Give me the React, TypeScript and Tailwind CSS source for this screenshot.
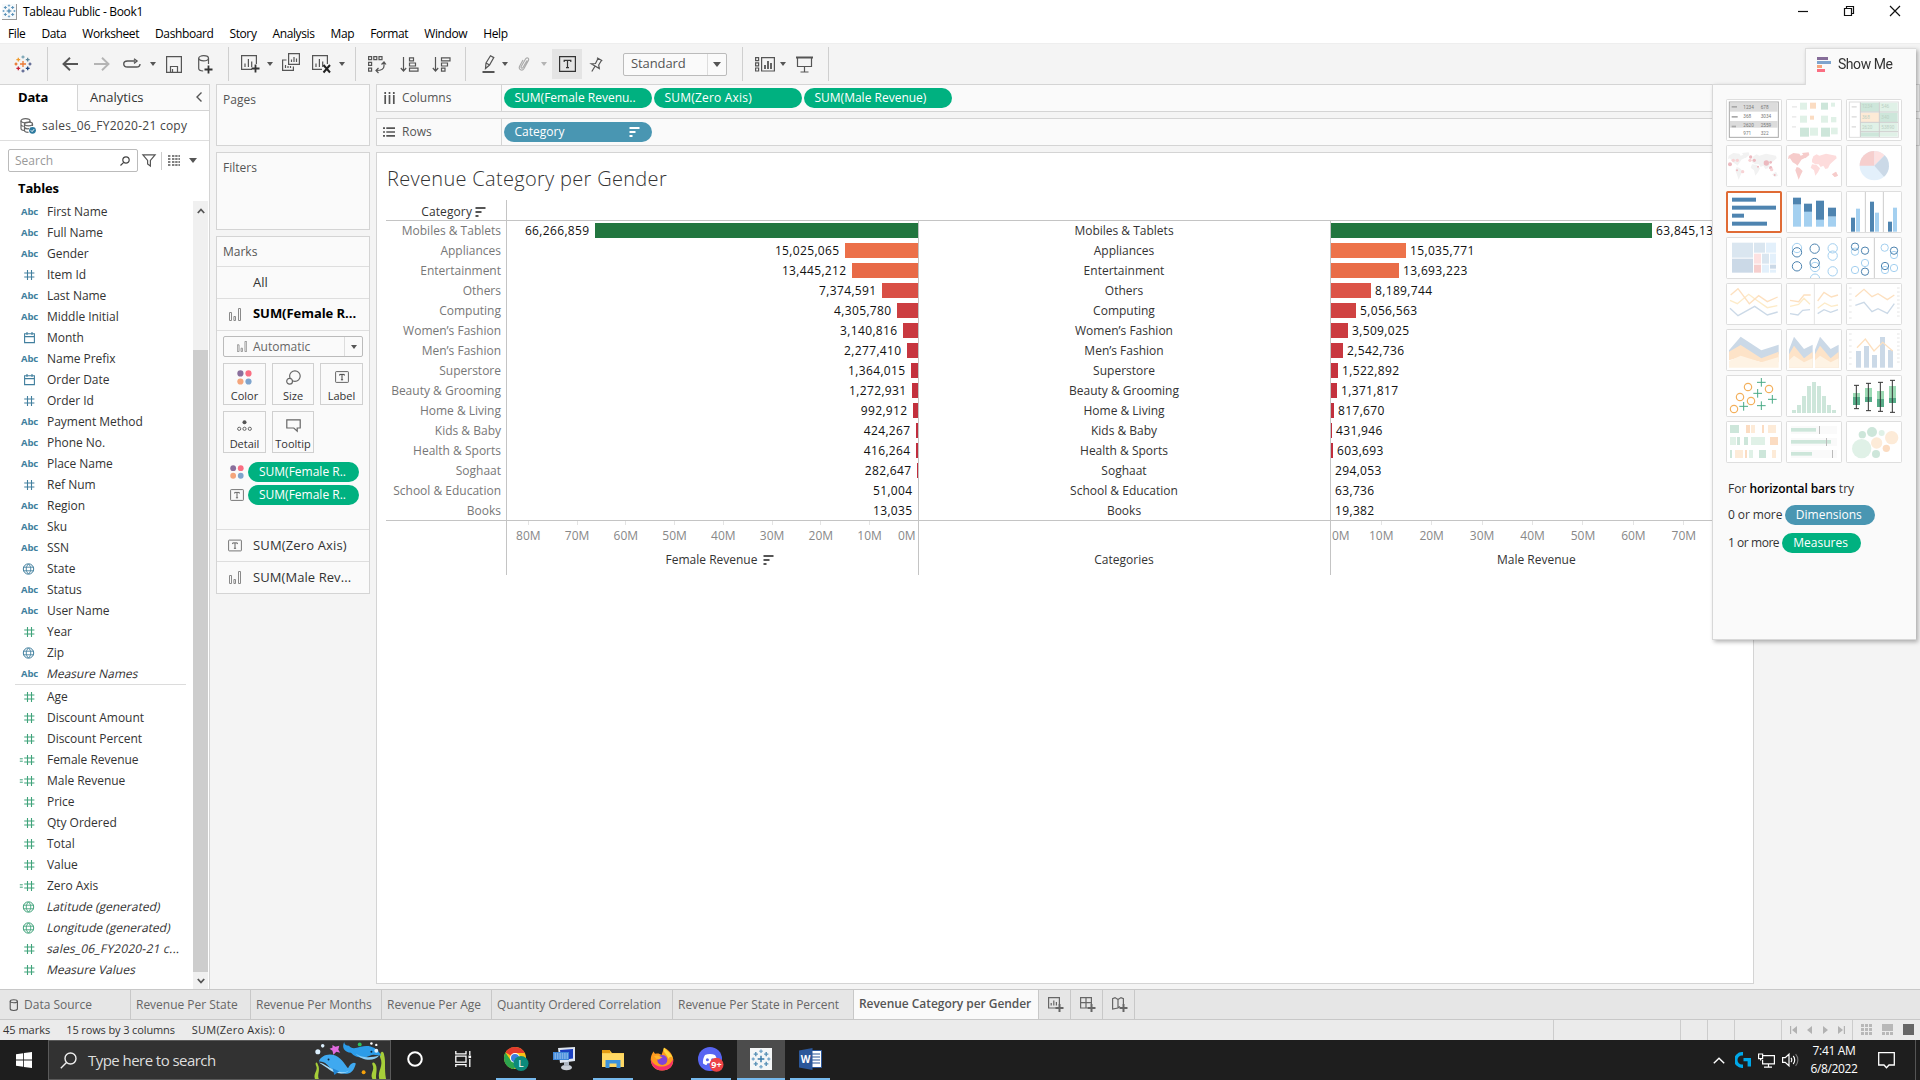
import React from "react";

type Kids = { children?: React.ReactNode };

const Ico = ({ w, h, children, s = "#555", className = "" }: Kids & { w: number; h: number; s?: string; className?: string }) => (
  <svg width={w} height={h} viewBox={`0 0 ${w} ${h}`} fill="none" stroke={s} strokeWidth="1.2" className={`shrink-0 overflow-visible ${className}`}>
    {children}
  </svg>
);

const Caret = ({ c = "#555", className = "" }: { c?: string; className?: string }) => (
  <svg width="6" height="4" viewBox="0 0 6 4" className={`shrink-0 ${className}`}>
    <path d="M0 0H6L3 4Z" fill={c} />
  </svg>
);

const BigCaret = ({ className = "" }: { className?: string }) => (
  <svg width="8" height="5" viewBox="0 0 8 5" className={`shrink-0 ${className}`}>
    <path d="M0 0H8L4 5Z" fill="#555" />
  </svg>
);

const Sep = ({ className = "" }: { className?: string }) => <div className={`h-[34px] w-px shrink-0 bg-[#cfcfcf] ${className}`} />;

const plus = (x: number, y: number, r: number) => `M${x - r} ${y}H${x + r}M${x} ${y - r}V${y + r}`;

const TableauMark = ({ size, mono = false }: { size: number; mono?: boolean }) => (
  <svg width={size} height={size} viewBox="0 0 18 18" fill="none" strokeWidth="1.3" className="shrink-0">
    <path d={plus(9, 9, 3)} stroke={mono ? "#3478a8" : "#eb7a35"} />
    <path d={plus(4.3, 4.6, 1.9)} stroke={mono ? "#5b92b8" : "#ef9b2e"} />
    <path d={plus(13.7, 4.6, 1.9)} stroke={mono ? "#5b92b8" : "#5b879b"} />
    <path d={plus(4.3, 13.4, 1.9)} stroke={mono ? "#5b92b8" : "#c72037"} />
    <path d={plus(13.7, 13.4, 1.9)} stroke={mono ? "#5b92b8" : "#1f457e"} />
    <path d={plus(9, 2, 1.5)} stroke={mono ? "#78a8ca" : "#7aa5b5"} />
    <path d={plus(9, 16, 1.5)} stroke={mono ? "#78a8ca" : "#5c6692"} />
    <path d={plus(2, 9, 1.4)} stroke={mono ? "#78a8ca" : "#e8762c"} />
    <path d={plus(16, 9, 1.4)} stroke={mono ? "#78a8ca" : "#5b6591"} />
  </svg>
);

const TBox = ({ w = 14, h = 12, c = "#666", b = "#777" }: { w?: number; h?: number; c?: string; b?: string }) => (
  <svg width={w} height={h} viewBox="0 0 14 12" fill="none" className="shrink-0">
    <rect x="0.6" y="0.6" width="12.8" height="10.8" rx="0.6" stroke={b} strokeWidth="1" />
    <path d="M4.7 4.6V3.4H9.3V4.6M7 3.4V8.7M5.9 8.8H8.1" stroke={c} strokeWidth="1" />
  </svg>
);

const MiniBars = ({ c = "#8a8a8a" }: { c?: string }) => (
  <svg width="12" height="13" viewBox="0 0 12 13" fill="none" stroke={c} className="shrink-0">
    <path d="M0.5 4.5h2v8h-2zM4.9 8.5h1.6v4H4.9zM9.5 0.5h2v12h-2z" />
  </svg>
);

const FourDots = ({ size = 15 }: { size?: number }) => (
  <svg width={size} height={size} viewBox="0 0 15 15" className="shrink-0">
    <circle cx="3.4" cy="3.4" r="3.1" fill="#8a6f9c" />
    <circle cx="11.5" cy="3.4" r="3.1" fill="#fa6e82" />
    <circle cx="3.4" cy="11.5" r="3.1" fill="#f4a57c" />
    <circle cx="11.5" cy="11.5" r="3.1" fill="#7ea4cd" />
  </svg>
);

const SortIcon = ({ c = "#555" }: { c?: string }) => (
  <svg width="11" height="10" viewBox="0 0 11 10" className="shrink-0">
    <path d="M0.5 0H10.5V2H0.5zM0.5 4H6.5V6H0.5zM0.5 8H3.5V10H0.5z" fill={c} />
  </svg>
);

/* ---------- title, menu, toolbar ---------- */

const MENUS = ["File", "Data", "Worksheet", "Dashboard", "Story", "Analysis", "Map", "Format", "Window", "Help"];

const TitleBar = () => (
  <div className="flex h-[22px] items-center bg-white pt-px text-xs text-black">
    <div className="ml-[2px] flex h-[16px] w-[15px] items-center justify-center border-r border-b border-[#999] bg-[#f6f9fb]">
      <TableauMark size={14} mono />
    </div>
    <span className="ml-[6px] tracking-[-0.3px]">Tableau Public - Book1</span>
    <div className="mr-[19px] ml-auto flex items-center gap-[34px] pb-[2px]">
      <Ico w={12} h={12} s="#111"><path d="M1 6.5H11" /></Ico>
      <Ico w={12} h={12} s="#111"><path d="M1.5 3.5h7v7h-7zM3.5 3.5v-2h7v7h-2" /></Ico>
      <Ico w={12} h={12} s="#111"><path d="M1 1L11 11M11 1L1 11" /></Ico>
    </div>
  </div>
);

const MenuBar = () => (
  <div className="flex h-[21px] items-center gap-[16px] bg-white pt-[2px] pl-[8px] text-xs tracking-[-0.39px] text-black">
    {MENUS.map((m) => (
      <span key={m}>{m}</span>
    ))}
  </div>
);

const Toolbar = () => (
  <div className="flex h-[41px] items-center border-t border-[#eee] bg-[#f4f4f4]">
    <div className="ml-[14px]"><TableauMark size={18} /></div>
    <Sep className="ml-[15px]" />
    <Ico w={16} h={14} className="ml-[14px]"><path d="M16 7H1.5M8 0.8L1.5 7L8 13.2" strokeWidth="1.9" /></Ico>
    <Ico w={16} h={14} s="#b4b4b4" className="ml-[16px]"><path d="M0 7H14.5M8 0.8L14.5 7L8 13.2" strokeWidth="1.9" /></Ico>
    <Ico w={18} h={12} className="ml-[13px]"><path d="M10 9H4.5C-0.5 9-0.5 3 4.5 3H12M10 9h3.5c2 0 3.5-1 3.5-3M11 0.8L14 3L11 5.4" strokeWidth="1.4" /></Ico>
    <Caret className="ml-[9px]" />
    <Ico w={16} h={17} className="ml-[10px]"><path d="M0.6 0.6H15.4V16.4H0.6zM4.5 16V10.5H11.5V16M6.5 16V13" /></Ico>
    <Ico w={15} h={19} className="ml-[16px]">
      <ellipse cx="5.6" cy="3.3" rx="4.9" ry="2.6" />
      <path d="M0.7 3.3V13.4c0 1.4 2 2.4 4.5 2.6M10.5 3.3V9" />
      <path d="M10.5 10.5V18.5M6.5 14.5H14.5" stroke="#333" strokeWidth="1.8" />
    </Ico>
    <Sep className="ml-[15px]" />
    <Ico w={19} h={18} className="ml-[12px]">
      <path d="M11 14.4H0.6V0.6H15.4V9M4 12V8.5M7.4 12V4M10.7 12V6.5" />
      <path d="M14.5 9.5V17.5M10.5 13.5H18.5" stroke="#333" strokeWidth="1.8" />
    </Ico>
    <Caret className="ml-[7px]" />
    <Ico w={18} h={18} className="ml-[9px] -mt-1">
      <path d="M6.6 0.6H17.4V11.4H6.6zM9.5 9V6.5M12 9V4M14.5 9V5.5M4.5 7H0.6V17.4H11.4V13.5M3.5 15V12M6 15V13M8.5 15V13" />
    </Ico>
    <Ico w={20} h={18} className="ml-[12px]">
      <path d="M10 14.4H0.6V0.6H15.4V9M4 12V8.5M7.4 12V4M10.7 12V6.5" />
      <path d="M11.5 10L18 17.5M18 10L11.5 17.5" stroke="#222" strokeWidth="2" />
    </Ico>
    <Caret className="ml-[7px]" />
    <Sep className="ml-[10px]" />
    <Ico w={18} h={17} className="ml-[12px]">
      <path d="M0.6 0.6h3v3h-3zM5.8 0.6h3v3h-3zM11 0.6h3v3h-3zM0.6 6.4h3v3h-3zM0.6 12.2h3v3h-3zM16 6v4c0 3-2 4.5-7.5 4.5M13.5 8.5L16 6L18 8.5M10.5 12L8 14.5L10.5 17" />
    </Ico>
    <Ico w={19} h={15} className="ml-[14px]">
      <path d="M3.5 0V14M0.8 11L3.5 14L6.2 11M9.5 0.8h4v3h-4zM9.5 6h6v3h-6zM9.5 11.2h8.5v3H9.5z" />
    </Ico>
    <Ico w={19} h={15} className="ml-[13px]">
      <path d="M3.5 0V14M0.8 11L3.5 14L6.2 11M9.5 0.8h8.5v3H9.5zM9.5 6h6v3h-6zM9.5 11.2h3.5v3H9.5z" />
    </Ico>
    <Sep className="ml-[14px]" />
    <Ico w={13} h={18} className="ml-[16px]">
      <path d="M4 8L8.5 0.8L11.8 2.6L7.5 10L3.5 13.5zM4 8L7.5 10" />
      <path d="M0.5 17H12.5" strokeWidth="2" />
    </Ico>
    <Caret className="ml-[7px]" />
    <Ico w={12} h={16} s="#ababab" className="ml-[10px]">
      <path d="M9 4.5L5 11.5c-.8 1.4-2.6.4-1.8-1L7.5 3c1.2-2.2 4-1 2.9 1.4L6 12.5c-1.8 3-6 1-4.4-2.2L5 4" />
    </Ico>
    <Caret c="#b4b4b4" className="ml-[11px]" />
    <div className="ml-[5px] flex h-[30px] w-[30px] items-center justify-center bg-[#e4e4e4]">
      <svg width="17" height="16" viewBox="0 0 17 16" fill="none" stroke="#333" strokeWidth="1.2">
        <path d="M0.6 0.6H16.4V15.4H0.6zM5.2 6V4.4H11.8V6M8.5 4.4V11.6M7 11.6H10" />
      </svg>
    </div>
    <Ico w={13} h={15} className="ml-[8px]">
      <path d="M7 0.8L12.3 3.8M8 1.5L5.5 6.5L1.2 6.8L9.3 11.5L8.7 8L11.4 3.5M5 9.2L1.8 14.5" />
    </Ico>
    <div className="ml-[20px] flex h-[23px] w-[104px] items-center rounded-[2px] border border-[#bbb] bg-[#fafafa] text-[13px] text-[#555]">
      <span className="pl-[7px] tracking-[-0.1px]">Standard</span>
      <div className="ml-auto flex h-full w-[19px] items-center justify-center border-l border-[#ddd]">
        <BigCaret />
      </div>
    </div>
    <Sep className="ml-[15px]" />
    <Ico w={20} h={15} className="ml-[12px]">
      <path d="M0.6 0.6h3v3h-3zM0.6 5.8h3v3h-3zM0.6 11h3v3h-3zM6.6 0.6H19.4V14H6.6z" />
      <path d="M10 12V8M13 12V4M16 12V6" strokeWidth="1.8" />
    </Ico>
    <Caret className="ml-[5px]" />
    <Ico w={17} h={17} className="ml-[10px]">
      <path d="M0 1.5H17" strokeWidth="2" />
      <path d="M1.5 2V10.5H15.5V2M8.5 10.5V16M4.5 16H12.5" />
    </Ico>
    <Sep className="ml-[15px]" />
  </div>
);

/* ---------- data pane ---------- */

type Field = [kind: string, name: string];

const DIMENSIONS: Field[] = [
  ["abc", "First Name"], ["abc", "Full Name"], ["abc", "Gender"], ["num", "Item Id"], ["abc", "Last Name"],
  ["abc", "Middle Initial"], ["date", "Month"], ["abc", "Name Prefix"], ["date", "Order Date"], ["num", "Order Id"],
  ["abc", "Payment Method"], ["abc", "Phone No."], ["abc", "Place Name"], ["num", "Ref Num"], ["abc", "Region"],
  ["abc", "Sku"], ["abc", "SSN"], ["geo", "State"], ["abc", "Status"], ["abc", "User Name"], ["gnum", "Year"],
  ["geo", "Zip"], ["abc*", "Measure Names"],
];

const MEASURES: Field[] = [
  ["gnum", "Age"], ["gnum", "Discount Amount"], ["gnum", "Discount Percent"], ["calc", "Female Revenue"],
  ["calc", "Male Revenue"], ["gnum", "Price"], ["gnum", "Qty Ordered"], ["gnum", "Total"], ["gnum", "Value"],
  ["calc", "Zero Axis"], ["ggeo*", "Latitude (generated)"], ["ggeo*", "Longitude (generated)"],
  ["gnum*", "sales_06_FY2020-21 c..."], ["gnum*", "Measure Values"],
];

const FieldIcon = ({ kind }: { kind: string }) => {
  const k = kind.replace("*", "");
  if (k === "abc") return <span className="pt-[2px] text-[9.5px] font-bold tracking-[-0.1px] text-[#417f9e]">Abc</span>;
  if (k === "date")
    return (
      <Ico w={16} h={12} s="#417f9e"><path d="M3.6 1.8H13.4V10.6H3.6zM3.6 4.6H13.4M6 0V3M11 0V3" strokeWidth="1.1" /></Ico>
    );
  if (k === "geo" || k === "ggeo")
    return (
      <Ico w={16} h={12} s={k === "geo" ? "#417f9e" : "#3fa37a"}>
        <circle cx="7.5" cy="6" r="5.2" strokeWidth="1" />
        <path d="M2.5 4.2H12.5M2.5 7.8H12.5M7.5 1C4.5 3.5 4.5 8.5 7.5 11M7.5 1C10.5 3.5 10.5 8.5 7.5 11" strokeWidth="0.9" />
      </Ico>
    );
  const c = k === "num" ? "#417f9e" : "#3fa37a";
  return (
    <Ico w={16} h={12} s={c}>
      <path d="M6.5 1V11M10.5 1V11M3.2 4H13.4M3.2 8H13.4" strokeWidth="1.1" />
      {k === "calc" && <path d="M-1.2 4.8H1.8M-1.2 7.2H1.8" strokeWidth="1" />}
    </Ico>
  );
};

const FieldRow = ({ f }: { f: Field }) => (
  <div className="flex h-[21px] items-center">
    <div className="flex w-[47px] items-center pl-[21px]"><FieldIcon kind={f[0]} /></div>
    <span
      className={
        f[0].endsWith("*")
          ? f[1].startsWith("sales")
            ? "inline-block -skew-x-12 tracking-[0.2px] whitespace-nowrap"
            : "inline-block -skew-x-12 whitespace-nowrap"
          : "tracking-[-0.03px]"
      }
    >
      {f[1]}
    </span>
  </div>
);

const DataPane = () => (
  <div className="flex h-full w-[210px] shrink-0 flex-col border-t border-r border-[#d4d4d4] bg-white text-[#333]">
    <div className="flex h-[26px] shrink-0 text-[13px]">
      <div className="w-[77px] pt-[3px] pl-[18px] font-bold tracking-[-0.2px] text-black">Data</div>
      <div className="flex flex-1 items-start border-b border-l border-[#d4d4d4] bg-[#fafafa] pt-[3px] pl-[12px]">
        Analytics
        <Ico w={6} h={10} className="mt-[4px] mr-[7px] ml-auto"><path d="M5.5 0.5L1 5L5.5 9.5" strokeWidth="1.4" /></Ico>
      </div>
    </div>
    <div className="flex h-[30px] shrink-0 items-center border-b border-[#dedede] pl-[20px] text-[12px] text-[#444]">
      <Ico w={16} h={16} s="#666">
        <ellipse cx="5.5" cy="2.8" rx="4.5" ry="2.1" />
        <path d="M1 2.8V10.5c0 1 1.5 1.8 3 2M1 6.5c0 .8 1 1.6 2.6 2M10 2.8V4" />
        <ellipse cx="8.5" cy="6" rx="4" ry="1.8" />
        <path d="M4.5 6V12.5c0 1 2 1.8 4 1.8M12.5 6V8M4.5 9.5c1 1.2 3 1.4 4.5 1.2" />
        <circle cx="12.5" cy="12.3" r="3.4" fill="#2d7a9f" stroke="none" />
        <path d="M10.8 12.3l1.3 1.3l2-2.4" stroke="#fff" strokeWidth="1" />
      </Ico>
      <span className="ml-[6px] tracking-[0.25px]">sales_06_FY2020-21 copy</span>
    </div>
    <div className="mt-[8px] flex h-[23px] shrink-0 items-center pl-[8px]">
      <div className="flex h-[23px] w-[130px] items-center justify-between rounded-[2px] border border-[#bbb] pr-[7px] pl-[6px] text-[12px] text-[#999]">
        Search
        <Ico w={10} h={10} s="#444"><circle cx="6" cy="4" r="3.2" /><path d="M3.7 6.3L0.5 9.5" /></Ico>
      </div>
      <Ico w={14} h={13} className="ml-[4px]" s="#555"><path d="M0.9 0.8H13.1L8.4 6.4V12L5.6 10V6.4z" /></Ico>
      <div className="ml-[5px] h-[18px] w-px bg-[#ccc]" />
      <Ico w={12} h={11} className="ml-[6px]" s="#555">
        <path d="M0 1H3M4 1H12M0 4H3M4 4H12M0 7H3M4 7H12M0 10H3M4 10H12" strokeDasharray="2.4 0.8" strokeWidth="1.4" />
      </Ico>
      <BigCaret className="ml-[9px]" />
    </div>
    <div className="flex h-[29px] shrink-0 items-center pt-[4px] pl-[18px] text-[13px] font-bold tracking-[-0.15px] text-black">Tables</div>
    <div className="flex flex-1">
      <div className="flex-1 text-[12px]">
        {DIMENSIONS.map((f) => <FieldRow key={f[1]} f={f} />)}
        <div className="mt-0 mr-[7px] mb-px ml-[15px] h-px bg-[#dcdcdc]" />
        {MEASURES.map((f) => <FieldRow key={f[1]} f={f} />)}
      </div>
      <div className="mr-px flex w-[15px] flex-col items-center bg-[#f0f0f0]">
        <div className="flex h-[149px] items-start pt-[7px]">
          <Ico w={8} h={6}><path d="M0.8 5L4 1.5L7.2 5" strokeWidth="1.8" /></Ico>
        </div>
        <div className="h-[622px] w-full bg-[#cdcdcd]" />
        <div className="flex flex-1 items-center">
          <Ico w={8} h={6}><path d="M0.8 1L4 4.5L7.2 1" strokeWidth="1.8" /></Ico>
        </div>
      </div>
    </div>
  </div>
);

/* ---------- cards ---------- */

const MarkButton = ({ label, w, children }: Kids & { label: string; w: string }) => (
  <div className={`flex h-[42px] flex-col items-center border border-[#d0d0d0] ${w}`}>
    <div className="flex h-[25px] items-center pt-px">{children}</div>
    <span className="text-[11px] leading-[14px] text-[#333]">{label}</span>
  </div>
);

const Cards = () => (
  <div className="flex w-[154px] shrink-0 flex-col text-[12px] text-[#555]">
    <div className="h-[62px] border border-[#d4d4d4] bg-[#fafafa] pt-[6px] pl-[6px]">Pages</div>
    <div className="mt-[6px] h-[78px] border border-[#d4d4d4] bg-[#fafafa] pt-[6px] pl-[6px]">Filters</div>
    <div className="mt-[6px] flex h-[358px] flex-col border border-[#d4d4d4] bg-[#fafafa]">
      <div className="flex h-[30px] items-center border-b border-[#dedede] pl-[6px]">Marks</div>
      <div className="flex h-[32px] items-center border-b border-[#dedede] pl-[36px] text-[13px] text-[#333]">All</div>
      <div className="flex h-[32px] items-center border-b border-[#dedede] pl-[12px] text-[13px] font-bold text-black">
        <MiniBars />
        <span className="ml-[12px] pb-[2px] tracking-[-0.05px]">SUM(Female R...</span>
      </div>
      <div className="mx-[6px] mt-[5px] flex h-[21px] items-center rounded-[2px] border border-[#bbb] pl-[12px] text-[#666]">
        <span className="origin-center scale-[0.85]"><MiniBars /></span>
        <span className="ml-[5px]">Automatic</span>
        <div className="ml-auto flex h-full w-[18px] items-center justify-center border-l border-[#ddd]"><Caret /></div>
      </div>
      <div className="mt-[6px] flex gap-[6px] px-[6px]">
        <MarkButton label="Color" w="w-[43px]"><FourDots /></MarkButton>
        <MarkButton label="Size" w="w-[42px]">
          <Ico w={15} h={15} s="#666"><circle cx="8.9" cy="6.1" r="5.3" /><circle cx="3.6" cy="11.2" r="2.9" fill="#fafafa" /></Ico>
        </MarkButton>
        <MarkButton label="Label" w="w-[43px]"><TBox c="#444" b="#666" /></MarkButton>
      </div>
      <div className="mt-[6px] flex gap-[6px] px-[6px]">
        <MarkButton label="Detail" w="w-[43px]">
          <Ico w={15} h={11} s="#666"><circle cx="7.5" cy="2.2" r="2" fill="#555" stroke="none" /><circle cx="2.2" cy="8.8" r="1.6" strokeWidth="1" /><circle cx="7.5" cy="8.8" r="1.6" strokeWidth="1" /><circle cx="12.8" cy="8.8" r="1.6" strokeWidth="1" /></Ico>
        </MarkButton>
        <MarkButton label="Tooltip" w="w-[42px]">
          <Ico w={15} h={13} s="#666"><path d="M0.8 0.8H14.2V9H11.2V12.2L7.8 9H0.8z" /></Ico>
        </MarkButton>
      </div>
      <div className="mt-[9px] flex flex-col gap-[3px] pl-[13px] text-white">
        <div className="flex items-center">
          <FourDots size={14} />
          <div className="ml-[4px] flex h-[20px] w-[111px] items-center rounded-full bg-[#00b180] pl-[11px] font-medium">SUM(Female R..</div>
        </div>
        <div className="flex items-center">
          <TBox />
          <div className="ml-[4px] flex h-[20px] w-[111px] items-center rounded-full bg-[#00b180] pl-[11px] font-medium">SUM(Female R..</div>
        </div>
      </div>
      <div className="mt-auto flex h-[32px] items-center border-t border-[#dedede] pl-[11px] text-[13px] text-[#333]">
        <TBox h={13} />
        <span className="ml-[11px] tracking-[0.15px]">SUM(Zero Axis)</span>
      </div>
      <div className="flex h-[32px] items-center border-t border-[#dedede] pl-[12px] text-[13px] text-[#333]">
        <MiniBars />
        <span className="ml-[12px] tracking-[0.07px]">SUM(Male Rev...</span>
      </div>
    </div>
  </div>
);

/* ---------- shelves ---------- */

const Pill = ({ children, blue = false }: Kids & { blue?: boolean }) => (
  <div className={`flex h-[20px] w-[148px] items-center justify-between rounded-full pr-[12px] pl-[10.5px] font-medium text-white ${blue ? "bg-[#4996b2]" : "bg-[#00b180]"}`}>
    {children}
  </div>
);

const Shelves = () => (
  <div className="flex flex-col gap-[6px] text-[12px] text-[#555]">
    <div className="flex h-[28px] border border-[#d4d4d4] bg-[#fafafa]">
      <div className="flex w-[125px] items-center border-r border-[#d4d4d4] pl-[7px]">
        <Ico w={11} h={12}><path d="M1.2 0V2M1.2 3V12M5.5 0V2M5.5 3V12M9.8 0V2M9.8 3V12" strokeWidth="1.7" /></Ico>
        <span className="ml-[7px]">Columns</span>
      </div>
      <div className="ml-[2px] flex items-center gap-[2px]">
        <Pill>SUM(Female Revenu..</Pill>
        <Pill><span className="tracking-[0.2px]">SUM(Zero Axis)</span></Pill>
        <Pill>SUM(Male Revenue)</Pill>
      </div>
    </div>
    <div className="flex h-[28px] border border-[#d4d4d4] bg-[#fafafa]">
      <div className="flex w-[125px] items-center border-r border-[#d4d4d4] pl-[6px]">
        <Ico w={12} h={10}><path d="M0 1.2H2M3.3 1.2H12M0 5H2M3.3 5H12M0 8.8H2M3.3 8.8H12" strokeWidth="1.7" /></Ico>
        <span className="ml-[7px]">Rows</span>
      </div>
      <div className="ml-[2px] flex items-center"><Pill blue>Category<SortIcon c="#fff" /></Pill></div>
    </div>
  </div>
);

/* ---------- chart ---------- */

type Row = { name: string; f: number; m: number; cf: string; cm: string };

const ROWS: Row[] = [
  { name: "Mobiles & Tablets", f: 66266859, m: 63845131, cf: "#22763f", cm: "#22763f" },
  { name: "Appliances", f: 15025065, m: 15035771, cf: "#ec7049", cm: "#ed734a" },
  { name: "Entertainment", f: 13445212, m: 13693223, cf: "#e86a47", cm: "#e96d48" },
  { name: "Others", f: 7374591, m: 8189744, cf: "#d94f45", cm: "#dc5447" },
  { name: "Computing", f: 4305780, m: 5056563, cf: "#cc3e41", cm: "#d04342" },
  { name: "Women’s Fashion", f: 3140816, m: 3509025, cf: "#c93940", cm: "#cb3b40" },
  { name: "Men’s Fashion", f: 2277410, m: 2542736, cf: "#c6353f", cm: "#c8373f" },
  { name: "Superstore", f: 1364015, m: 1522892, cf: "#c3313e", cm: "#c5333e" },
  { name: "Beauty & Grooming", f: 1272931, m: 1371817, cf: "#c3313e", cm: "#c4323e" },
  { name: "Home & Living", f: 992912, m: 817670, cf: "#c2303d", cm: "#c1303d" },
  { name: "Kids & Baby", f: 424267, m: 431946, cf: "#c02d3d", cm: "#c02d3d" },
  { name: "Health & Sports", f: 416264, m: 603693, cf: "#c02d3d", cm: "#c02d3d" },
  { name: "Soghaat", f: 282647, m: 294053, cf: "#c02d3d", cm: "#c02d3d" },
  { name: "School & Education", f: 51004, m: 63736, cf: "#c02d3d", cm: "#c02d3d" },
  { name: "Books", f: 13035, m: 19382, cf: "#c02d3d", cm: "#c02d3d" },
];

const fmt = (n: number) => n.toLocaleString("en-US");
const barWidth = (n: number, scale: number, inset: number) => ({
  width: Math.max(0, Math.round((n / 1e7) * scale - inset)),
});

const Chart = () => (
  <div className="flex h-[832px] w-[1378px] flex-col overflow-hidden border border-[#d4d4d4] bg-white">
    <div className="mt-[12px] ml-[10px] text-[20px] leading-[28px] font-light tracking-[0.31px] text-[#333]">Revenue Category per Gender</div>
    <div className="mt-[7px] ml-[9px] flex text-[12px]">
      <div className="flex w-[121px] flex-col border-r border-[#c4c4c4] text-[#777]">
        <div className="flex h-[21px] items-center justify-end gap-[3px] border-b border-[#c4c4c4] pt-[3px] pr-[20px] tracking-[0.1px] text-[#333]">
          Category <SortIcon />
        </div>
        {ROWS.map((r) => (
          <div key={r.name} className="flex h-[20px] items-center justify-end pr-[5px] pb-px">{r.name}</div>
        ))}
        <div className="-mt-px h-[55px] border-t border-[#c4c4c4]" />
      </div>
      <div className="flex w-[412px] flex-col text-[#111]">
        <div className="h-[21px] border-b border-[#c4c4c4]" />
        <div className="flex flex-col border-r border-[#c4c4c4]">
          {ROWS.map((r) => (
            <div key={r.name} className="flex h-[20px] items-center justify-end pb-px">
              <span className="mr-[5.5px] tracking-[0.35px]">{fmt(r.f)}</span>
              <div className="h-[15px]" style={{ ...barWidth(r.f, 48.75, 0), background: r.cf }} />
            </div>
          ))}
          <div className="-mt-px h-[55px] border-t border-[#c4c4c4]">
            <div className="-ml-[3px] flex text-[#888]">
              {["80M", "70M", "60M", "50M", "40M", "30M", "20M", "10M"].map((t) => (
                <div key={t} className="flex w-[48.75px] shrink-0 flex-col items-center">
                  <div className="h-[4px] w-px bg-[#e4e4e4]" />
                  <span className="leading-[22px]">{t}</span>
                </div>
              ))}
              <span className="mt-[4px] ml-[4px] leading-[22px]">0M</span>
            </div>
            <div className="flex items-center justify-center gap-[6px] pl-[15px] leading-[26px] text-[#333]">
              Female Revenue <SortIcon />
            </div>
          </div>
        </div>
      </div>
      <div className="flex w-[412px] flex-col text-[#333]">
        <div className="h-[21px] border-b border-[#c4c4c4]" />
        <div className="flex flex-col border-r border-[#c4c4c4]">
          {ROWS.map((r) => (
            <div key={r.name} className="flex h-[20px] items-center justify-center pr-px pb-px">{r.name}</div>
          ))}
          <div className="-mt-px h-[55px] border-t border-[#c4c4c4] pt-[26px] pr-px text-center leading-[26px]">Categories</div>
        </div>
      </div>
      <div className="flex flex-1 flex-col text-[#111]">
        <div className="h-[21px] border-b border-[#c4c4c4]" />
        {ROWS.map((r) => (
          <div key={r.name} className="flex h-[20px] items-center pb-px">
            <div className="h-[15px]" style={{ ...barWidth(r.m, 50.5, 1), background: r.cm }} />
            <span className="ml-[4px] tracking-[0.35px]">{fmt(r.m)}</span>
          </div>
        ))}
        <div className="-mt-px h-[55px] border-t border-[#c4c4c4]">
          <div className="flex text-[#888]">
            <span className="mt-[4px] w-[25px] pl-px leading-[22px]">0M</span>
            {["10M", "20M", "30M", "40M", "50M", "60M", "70M"].map((t) => (
              <div key={t} className="flex w-[50.45px] shrink-0 flex-col items-center">
                <div className="h-[4px] w-px bg-[#e4e4e4]" />
                <span className="leading-[22px]">{t}</span>
              </div>
            ))}
          </div>
          <div className="pl-[166px] leading-[26px] text-[#333]">Male Revenue</div>
        </div>
      </div>
    </div>
  </div>
);

/* ---------- Show Me ---------- */

const rects = (fill: string, list: number[][]) =>
  list.map((r, i) => <rect key={fill + i} x={r[0]} y={r[1]} width={r[2]} height={r[3]} fill={fill} />);
const rings = (stroke: string, r: number, list: number[][], w = 3) =>
  list.map((c, i) => <circle key={stroke + i} cx={c[0]} cy={c[1]} r={r} fill="none" stroke={stroke} strokeWidth={w} />);
const dots = (fill: string, list: number[][]) =>
  list.map((c, i) => <circle key={fill + i} cx={c[0]} cy={c[1]} r={c[2]} fill={fill} />);
const line = (stroke: string, d: string, w = 4) => <path d={d} stroke={stroke} strokeWidth={w} fill="none" />;

const LAND_W = "M8 32L22 24L40 26L44 32L56 28L58 38L46 44L40 54L34 62L30 58L20 52L12 40L6 42zM48 24L68 22L70 30L58 40zM32 66L40 68L50 78L44 90L38 104L34 92L28 76z";
const LAND_E = "M78 44L82 34L92 28L100 32L120 26L150 32L152 40L140 50L132 58L126 70L118 72L112 62L104 66L98 58L88 58L78 52zM78 58L92 60L102 70L96 82L88 92L84 76L74 68zM138 88L150 80L156 92L146 96z";

const tableText = (list: [number, number, string][], fill: string) => (
  <g fill={fill} fontSize="14" fontFamily="Roboto, sans-serif">
    {list.map(([x, y, t]) => <text key={t} x={x} y={y}>{t}</text>)}
  </g>
);

const B = "#4e84b0";
const L = "#a4d0f0";
const TICKS = "M9 15h8M9 33h8M9 51h8M9 69h8M9 87h8M9 105h8M153 15h8M153 27h8M153 39h8M153 51h8M153 63h8M153 75h8M153 87h8M153 99h8";

const THUMBS: React.ReactNode[] = [
  <g key="0">
    <rect x="10" y="9" width="147" height="106" fill="#fff" stroke="#a9a9a9" strokeWidth="3" />
    {rects("#dcdcdc", [[12, 11, 143, 27], [12, 66, 143, 20]])}
    {rects("#a9a9a9", [[17, 21, 16, 5], [17, 51, 18, 5], [17, 80, 13, 5]])}
    {tableText([[52, 30, "1234"], [104, 30, "678"], [52, 57, "368"], [104, 57, "3034"], [52, 84, "2620"], [104, 84, "2559"], [52, 107, "971"], [104, 107, "322"]], "#777")}
  </g>,
  <g key="1">
    {rects("#ececec", [[18, 21, 15, 5], [18, 51, 13, 5], [18, 81, 12, 5]])}
    {rects("#e0f1e7", [[42, 11, 21, 21], [135, 11, 12, 12], [42, 50, 21, 21], [105, 50, 21, 21], [135, 54, 16, 16], [72, 86, 24, 24], [135, 86, 20, 20]])}
    {rects("#cde6da", [[105, 11, 21, 21], [42, 86, 27, 27], [105, 86, 27, 27]])}
    {rects("#fbdcc2", [[72, 11, 18, 18], [72, 50, 12, 12]])}
  </g>,
  <g key="2">
    <rect x="10" y="9" width="147" height="106" fill="#fff" stroke="#dedede" strokeWidth="3" />
    {rects("#cde6da", [[43, 11, 56, 27], [101, 41, 54, 28], [43, 100, 56, 13]])}
    {rects("#e0f1e7", [[101, 11, 54, 27], [43, 72, 56, 25], [101, 72, 54, 25], [101, 100, 54, 13]])}
    {rects("#fdead6", [[43, 41, 56, 28]])}
    {rects("#e2e2e2", [[17, 21, 15, 5], [17, 51, 15, 5], [17, 81, 13, 5]])}
    {line("#ccc", "M43 39H156M43 70H156M43 98H156M43 10V114M100 10V114", 3)}
    {tableText([[48, 28, "1234"], [106, 28, "546"], [48, 60, "368"], [106, 60, "340"], [48, 90, "2620"], [106, 90, "53890"]], "#bcd0c4")}
  </g>,
  <g key="3">
    <path d={LAND_W} fill="#f2f2f2" /><path d={LAND_E} fill="#f2f2f2" />
    {dots("#ecb9bf", [[12, 58, 6], [121, 54, 8], [134, 68, 5], [74, 36, 5], [85, 46, 5], [96, 65, 3], [33, 76, 3], [146, 90, 3], [134, 52, 4]])}
    {dots("#f8d3d5", [[34, 46, 5], [22, 46, 5], [72, 46, 5], [137, 74, 5], [50, 80, 5]])}
  </g>,
  <g key="4"><path d={LAND_W} fill="#f6cccb" /><path d={LAND_E} fill="#fddcdc" /><path d="M138 88L150 80L156 92L146 96z" fill="#f6cccb" /></g>,
  <g key="5">
    <circle cx="85" cy="62" r="44" fill="#e3f0fb" />
    <path d="M85 62V18A44 44 0 0 0 41 62z" fill="#f6cfce" /><path d="M85 62V18A44 44 0 0 1 116 31z" fill="#fde1e1" /><path d="M85 62L116 31A44 44 0 0 1 114 95z" fill="#cbd9e7" />
  </g>,
  <g key="6">{rects(B, [[18, 20, 72, 12], [18, 44, 132, 12], [18, 68, 36, 12], [18, 92, 105, 12]])}</g>,
  <g key="7">
    {rects(B, [[21, 20, 24, 21], [54, 38, 24, 25], [90, 29, 24, 58], [126, 50, 24, 27]])}
    {rects(L, [[21, 41, 24, 66], [54, 62, 24, 45], [90, 86, 24, 21], [126, 77, 24, 30]])}
  </g>,
  <g key="8">
    {rects(B, [[15, 80, 12, 42], [72, 32, 12, 90], [126, 92, 12, 30]])}
    {rects(L, [[30, 53, 12, 69], [87, 65, 12, 57], [141, 50, 12, 72]])}
    {line("#ccc", "M58 3V123M112 3V123", 3)}
  </g>,
  <g key="9">
    {rects("#dae6f0", [[18, 17, 63, 45], [84, 17, 33, 30], [108, 50, 21, 30]])}
    {rects("#cbd9e7", [[18, 65, 63, 42], [132, 83, 18, 12]])}
    {rects("#e3f0fb", [[120, 17, 30, 30], [132, 50, 18, 30], [108, 83, 21, 24], [132, 98, 18, 9]])}
    {rects("#fde1e1", [[84, 50, 21, 30]])}{rects("#f6cfce", [[84, 83, 21, 24]])}
  </g>,
  <g key="10">
    {rings(L, 14, [[33, 33], [140, 34], [140, 56], [87, 90], [140, 103], [87, 125]])}
    {rings(B, 14, [[33, 46], [33, 88], [86, 35], [86, 78]])}
  </g>,
  <g key="11">
    {line("#ccc", "M85 3V123", 3)}
    {rings(L, 11, [[27, 44], [57, 78], [27, 99], [116, 32], [144, 54], [117, 99], [144, 93]])}
    {rings(B, 11, [[27, 29], [57, 41], [57, 104], [144, 41], [117, 87]])}
  </g>,
  <g key="12">
    {line("#fdebc8", "M12 52L34 62L68 34L90 50L124 74L154 68")}
    {line("#fde0bf", "M14 36L36 17L70 62L98 38L124 56L155 42")}
    {line("#cbd9e7", "M12 76L36 98L86 70L124 96L155 87")}
  </g>,
  <g key="13">
    {line("#e4e4e4", "M85 3V123", 3)}
    {line("#fdebc8", "M12 70L38 64L54 46L72 64M95 76L116 60L136 70L156 66")}
    {line("#fde0bf", "M12 52L38 56L54 36L74 36M95 54L114 28L136 42L156 36")}
    {line("#cbd9e7", "M12 92L36 96L50 82L72 80M95 92L114 80L134 88L156 80")}
  </g>,
  <g key="14">
    {line("#e4e4e4", TICKS, 3)}
    {line("#fde0bf", "M28 41L54 19L78 41L96 32L124 50L145 36")}
    {line("#cbd9e7", "M28 67L54 58L78 86L96 77L124 91L145 62")}
  </g>,
  <g key="15">
    <path d="M9 64L44 23L106 64L158 47V76L106 92L44 50L9 74z" fill="#cbd9e7" />
    <path d="M9 68L44 48L106 88L158 68V100L106 100L44 84L9 94z" fill="#fde3c8" />
    <path d="M9 96L44 80L106 100L158 84V116H9z" fill="#fef3e4" />
  </g>,
  <g key="16">
    <path d="M9 62L24 23L54 60L80 47V116H9zM87 62L102 23L134 60L158 47V116H87z" fill="#cbd9e7" />
    <path d="M9 76L24 50L54 88L80 68V116H9zM87 76L102 50L134 88L158 68V116H87z" fill="#fde3c8" />
    <path d="M9 94L24 80L54 100L80 88V116H9zM87 94L102 80L134 100L158 88V116H87z" fill="#fef3e4" />
  </g>,
  <g key="17">
    {line("#e4e4e4", TICKS, 3)}
    {rects("#cbd9e7", [[30, 66, 15, 50], [54, 51, 15, 65], [78, 78, 15, 38], [102, 24, 15, 92], [126, 63, 15, 53]])}
    {line("#fde0bf", "M33 56L58 30L84 66L110 40L140 66")}
  </g>,
  <g key="18">
    {rings("#f3b05c", 11, [[66, 36], [129, 42], [42, 66], [75, 78], [24, 102]], 3.5)}
    {line("#4aaa86", [plus(106, 22, 13), plus(95, 55, 13), plus(53, 94, 13), plus(106, 92, 13), plus(139, 73, 13)].join(""), 3)}
  </g>,
  <g key="19">{rects("#cde6da", [[18, 105, 12, 9], [33, 90, 12, 24], [48, 63, 12, 51], [63, 33, 12, 81], [78, 21, 12, 93], [93, 33, 12, 81], [108, 63, 12, 51], [123, 90, 12, 24], [138, 105, 12, 9]])}</g>,
  <g key="20">
    {rects("#9bdab4", [[21, 54, 21, 12], [57, 39, 21, 27], [93, 48, 21, 24], [129, 33, 21, 36]])}
    {rects("#55ab87", [[21, 66, 21, 24], [57, 66, 21, 15], [93, 72, 21, 24], [129, 69, 21, 15]])}
    {line("#333", "M31 31V101M24 31H39M24 101H39M67 25V107M60 25H75M60 107H75M103 22V109M96 22H111M96 109H111M139 16V112M132 16H147M132 112H147", 3)}
  </g>,
  <g key="21">
    {rects("#cde6da", [[12, 12, 27, 24], [33, 48, 9, 24], [54, 48, 12, 24], [12, 87, 6, 24], [99, 87, 21, 24]])}
    {rects("#fbdcc2", [[60, 12, 12, 24], [108, 12, 6, 24], [132, 48, 24, 24], [57, 87, 6, 24]])}
    {rects("#fdebd8", [[75, 12, 12, 24], [126, 12, 24, 24], [27, 87, 24, 24], [138, 87, 12, 24]])}
    {rects("#e0f1e7", [[12, 48, 18, 24], [75, 48, 42, 24], [69, 87, 12, 24]])}
  </g>,
  <g key="22">
    {rects("#fafafa", [[15, 15, 138, 24], [15, 51, 138, 24], [15, 87, 138, 24]])}
    {rects("#cde6da", [[15, 21, 75, 11], [15, 57, 120, 11], [15, 93, 63, 11]])}
    {rects("#bbb", [[99, 15, 3, 24], [120, 51, 3, 24], [138, 87, 3, 24]])}
  </g>,
  <g key="23">
    {dots("#e0f1e7", [[47, 83, 29], [107, 36, 9]])}
    {dots("#cde6da", [[49, 41, 11], [78, 33, 15], [90, 99, 12]])}
    {dots("#fdebd8", [[137, 50, 20], [92, 66, 17]])}{dots("#fbdcc2", [[121, 82, 11]])}
  </g>,
];

const ShowMe = () => (
  <div className="absolute top-[48px] right-[4px] flex w-[204px] flex-col drop-shadow-[2px_2px_2px_rgba(0,0,0,0.3)]">
    <div className="z-10 -mb-px ml-auto flex h-[37px] w-[111px] items-center border-t border-l border-[#dcdcdc] bg-[#fafafa] pb-[6px] pl-[11px] text-[14px] text-[#333]">
      <svg width="14" height="15" viewBox="0 0 14 15" className="mr-[7px]">
        <path d="M0 0H11V3H0z" fill="#866d99" /><path d="M0 4H14V7H0z" fill="#7ea4cd" /><path d="M0 8H5V11H0z" fill="#f4a57c" /><path d="M0 12H8V15H0z" fill="#fa6e82" />
      </svg>
      <span className="font-['Roboto'] tracking-[-0.45px]">Show Me</span>
    </div>
    <div className="flex h-[556px] flex-col border border-r-0 border-[#d8d8d8] bg-[#fafafa] pt-[14px] pl-[13px] text-[12px] text-[#333]">
      <div className="grid w-[176px] grid-cols-[56px_56px_56px] gap-x-[4px] gap-y-[4px]">
        {THUMBS.map((t, i) => (
          <svg key={i} width="56" height="42" viewBox="0 0 168 126" className="bg-white">
            {t}
            <rect x={i === 6 ? 3 : 1.5} y={i === 6 ? 3 : 1.5} width={i === 6 ? 162 : 165} height={i === 6 ? 120 : 123} rx="2" fill="none" stroke={i === 6 ? "#e06b35" : "#dedede"} strokeWidth={i === 6 ? 6 : 3} />
          </svg>
        ))}
      </div>
      <div className="mt-[16px] ml-[2px] leading-[20px]">For <span className="font-semibold tracking-[-0.1px] text-black">horizontal bars</span> try</div>
      <div className="mt-[6px] ml-[2px] flex items-center gap-[3px]">
        <span className="tracking-[-0.1px]">0 or more</span>
        <span className="flex h-[20px] w-[90px] items-center justify-center rounded-full bg-[#4996b2] pr-[3px] text-white">Dimensions</span>
      </div>
      <div className="mt-[8px] ml-[2px] flex items-center gap-[3px]">
        <span className="tracking-[-0.45px]">1 or more</span>
        <span className="flex h-[20px] w-[79px] items-center justify-center rounded-full bg-[#00b180] pr-[2px] text-white">Measures</span>
      </div>
    </div>
  </div>
);

/* ---------- sheet tabs and status bar ---------- */

const TABS: [string, string][] = [
  ["Revenue Per State", "w-[120px]"],
  ["Revenue Per Months", "w-[131px]"],
  ["Revenue Per Age", "w-[110px]"],
  ["Quantity Ordered Correlation", "w-[181px]"],
  ["Revenue Per State in Percent", "w-[181px]"],
];

const SheetTabs = () => (
  <div className="flex h-[31px] shrink-0 border-t border-b border-[#c8c8c8] bg-[#e6e6e6] text-[12px] text-[#666]">
    <div className="flex w-[131px] items-center border-r border-[#c8c8c8] pl-[9px]">
      <Ico w={10} h={12} s="#555"><ellipse cx="4.8" cy="2.2" rx="3.6" ry="1.5" strokeWidth="1.1" /><path d="M1.2 2.2V9.8C1.2 12 8.4 12 8.4 9.8V2.2" strokeWidth="1.1" /></Ico>
      <span className="ml-[5px]">Data Source</span>
    </div>
    {TABS.map(([t, w]) => (
      <div key={t} className={`flex items-center border-r border-[#c8c8c8] pl-[5px] tracking-[-0.02px] whitespace-nowrap ${w}`}>{t}</div>
    ))}
    <div className="flex w-[185px] items-center border-r border-[#c8c8c8] bg-[#fafafa] pb-px pl-[5px] font-semibold text-[#555]">
      <span className="tracking-[-0.05px] whitespace-nowrap">Revenue Category per Gender</span>
    </div>
    {["M8 11H0.6V0.6H11.4V7M3.2 8.5V6M5.8 8.5V3.5M8.4 8.5V5", "M7.5 11H0.6V0.6H11.4V7M0.6 5.6H11.4M6 0.6V11", "M8 9.5L6 11L0.6 12V1.6L3 0.6L6 2.6L9 0.6L11.4 1.6V7M6 2.6V11"].map((d) => (
      <div key={d} className="flex w-[32px] items-center border-r border-[#c8c8c8] pl-[9px]">
        <Ico w={16} h={16} s="#666"><path d={d} /><path d="M11.5 7V15M7.5 11H15.5" strokeWidth="2" /></Ico>
      </div>
    ))}
  </div>
);

const StatusBar = () => (
  <div className="flex h-[20px] shrink-0 items-center bg-[#ebebeb] pl-[3px] text-[11px] text-[#333]">
    <span>45 marks</span>
    <span className="ml-[16px] tracking-[-0.12px]">15 rows by 3 columns</span>
    <span className="ml-[17px] tracking-[0.2px]">SUM(Zero Axis): 0</span>
    <div className="ml-auto flex h-full w-[367px]">
      <div className="w-[127px] border-l border-[#ccc]" />
      <div className="w-[27px] border-l border-[#ccc]" />
      <div className="w-[27px] border-l border-[#ccc]" />
      <div className="w-[47px] border-l border-[#ccc]" />
      <div className="flex w-[71px] items-center gap-[9px] border-l border-[#ccc] pb-px pl-[8px]">
        <svg width="7" height="8" viewBox="0 0 7 8" fill="#b2b2b2"><path d="M0 0H1.2V8H0zM7 0V8L2 4z" /></svg>
        <svg width="7" height="8" viewBox="0 0 7 8" fill="#b2b2b2"><path d="M6 0V8L1 4z" /></svg>
        <svg width="7" height="8" viewBox="0 0 7 8" fill="#b2b2b2"><path d="M1 0V8L6 4z" /></svg>
        <svg width="7" height="8" viewBox="0 0 7 8" fill="#b2b2b2"><path d="M5.8 0H7V8H5.8zM0 0V8L5 4z" /></svg>
      </div>
      <div className="flex flex-1 items-center gap-[10px] border-l border-[#ccc] pb-px pl-[8px]">
        <svg width="11" height="11" viewBox="0 0 11 11" fill="#b8b8b8"><path d="M0 0h3v3H0zM4 0h3v3H4zM8 0h3v3H8zM0 4h3v3H0zM4 4h3v3H4zM8 4h3v3H8zM0 8h3v3H0zM4 8h3v3H4zM8 8h3v3H8z" /></svg>
        <svg width="11" height="11" viewBox="0 0 11 11" fill="#b8b8b8"><path d="M0 0h11v7H0zM0 8h3v3H0zM4 8h3v3H4zM8 8h3v3H8z" /></svg>
        <div className="h-[11px] w-[11px] bg-[#666]" />
      </div>
    </div>
  </div>
);

/* ---------- Windows taskbar ---------- */

const Dolphins = () => (
  <svg width="75" height="38" viewBox="0 0 75 39" className="shrink-0">
    <path d="M2 39C0 33 6 30 3 25C2 22 4 21 5 24C8 30 4 34 6 39zM61 39C58 33 64 30 61 24C60 21 64 21 65 26C66 32 64 35 65 39zM68 39C66 30 73 26 69 17C68 12 72 8 73 14C75 22 73 27 75 39z" fill="#a6ce39" />
    <path d="M6 21C8 15 16 12 23 15C31 19 33 25 36 28C38 24 41 21 44 23C43 27 41 32 37 33C31 35 22 32 16 26C13 22 10 21 6 21z" fill="#3fa9f0" />
    <path d="M6 22C12 23 17 28 25 31C31 33 35 32 37 30C32 36 20 33 15 28z" fill="#a6dcfa" />
    <path d="M20 28L22 35L27 31z" fill="#2284d0" />
    <path d="M70 15C65 5 56 4 49 6C43 8 39 8 37 5C34 5 32 3 32 1C29 7 33 12 39 12C44 18 53 18 59 15C62 13 66 15 70 15z" fill="#2c9ce8" />
    <path d="M44 13C51 18 60 17 68 15C62 22 50 20 44 13z" fill="#8bcdf5" />
    <path d="M20 4l3 2l4-1l-1 4l2 3l-4-1l-3 3l-1-4l-3-2l3-1z" fill="#e26be0" />
    <circle cx="48" cy="3.5" r="2" fill="#2fc05c" /><circle cx="52" cy="32" r="2" fill="#f5a10a" />
    <circle cx="5" cy="11" r="2.6" fill="#dceffc" /><circle cx="10" cy="5" r="1.8" fill="#dceffc" /><circle cx="65" cy="10" r="2" fill="#dceffc" /><circle cx="60" cy="2.5" r="1.3" fill="#fff" /><circle cx="65" cy="4" r="1.2" fill="#fff" />
    <circle cx="16" cy="19" r="1" fill="#123" /><circle cx="60" cy="11" r="1" fill="#123" />
  </svg>
);

const TaskItem = ({ w, line: l, active = false, children }: Kids & { w: string; line?: string; active?: boolean }) => (
  <div className={`flex h-full flex-col items-center ${w} ${active ? "bg-[#4c4c4c]" : ""}`}>
    <div className="flex flex-1 items-center justify-center">{children}</div>
    <div className={`h-[2px] ${l ? `${l} bg-[#76b9ed]` : ""}`} />
  </div>
);

const Taskbar = () => (
  <div className="flex h-[40px] shrink-0 items-center bg-[#1e1e1e] text-white">
    <svg width="16" height="16" viewBox="0 0 16 16" fill="#fff" className="ml-[16px]">
      <path d="M0 2.2L7.2 1.2V7.6H0zM8 1.1L16 0V7.6H8zM0 8.4H7.2V14.8L0 13.8zM8 8.4H16V16L8 14.9z" />
    </svg>
    <div className="ml-[16px] flex h-[40px] w-[343px] items-center border border-[#5a5a5a] bg-[#323232]">
      <Ico w={17} h={17} s="#eee" className="ml-[11px]"><circle cx="10.5" cy="6.5" r="5.5" strokeWidth="1.4" /><path d="M6.5 10.5L0.8 16.2" strokeWidth="1.4" /></Ico>
      <span className="ml-[11px] text-[15px] tracking-[-0.55px] text-[#dedede]">Type here to search</span>
      <div className="mr-[3px] ml-auto self-end"><Dolphins /></div>
    </div>
    <TaskItem w="w-[48px]"><svg width="16" height="16" viewBox="0 0 16 16"><circle cx="8" cy="8" r="6.8" fill="none" stroke="#fff" strokeWidth="2" /></svg></TaskItem>
    <TaskItem w="w-[48px]">
      <Ico w={17} h={16} s="#fff"><path d="M0.8 0V2.8H11V0M0.8 5.2H11V11.2H0.8zM0.8 16V13.6H11V16M14.8 0V4M14.8 8V16" strokeWidth="1.3" /><path d="M13.5 4.5h2.6v2.6h-2.6z" fill="#fff" stroke="none" /></Ico>
    </TaskItem>
    <TaskItem w="w-[57px]" line="w-[40px]">
      <svg width="26" height="26" viewBox="0 0 26 26">
        <circle cx="12" cy="12" r="11" fill="#fbc116" />
        <path d="M12 12L2.5 6.5A11 11 0 0 1 21.8 7H12z" fill="#e33b2e" />
        <path d="M2.4 6.6A11 11 0 0 0 11 23L16 14.5L7.5 14z" fill="#2da44e" />
        <circle cx="12" cy="12" r="5" fill="#fff" /><circle cx="12" cy="12" r="4" fill="#3b7de0" />
        <circle cx="18" cy="17.5" r="7.5" fill="#0c8a7b" />
        <text x="18" y="21" fontSize="9.5" fill="#fff" textAnchor="middle" fontFamily="Roboto">L</text>
      </svg>
    </TaskItem>
    <TaskItem w="w-[41px]">
      <svg width="24" height="24" viewBox="0 0 24 24">
        <path d="M5 1L22 0V14L7 16z" fill="#dfe6f0" /><path d="M7 3L20 2V11.5L8.5 13z" fill="#1a3fc0" />
        <path d="M0 5H16V13H0z" fill="#3d86d8" /><path d="M1.5 7H15M1.5 9H15M1.5 11H15" stroke="#cfe4fb" strokeWidth="0.9" strokeDasharray="1.6 0.8" />
        <ellipse cx="13.5" cy="20.5" rx="5.5" ry="2.8" fill="#c9ced6" /><path d="M11 15h5v4h-5z" fill="#aeb6c2" />
      </svg>
    </TaskItem>
    <TaskItem w="w-[55px]" line="w-[40px]">
      <svg width="22" height="20" viewBox="0 0 22 20">
        <path d="M0 1.5H8L10 4H22V18H0z" fill="#f6c344" /><path d="M0 4.5H22V18H0z" fill="#ffd864" /><path d="M0 1H8V4H0z" fill="#e39b14" />
        <path d="M3.5 19V11H18.5V19H14.5V14.5H7.5V19z" fill="#3c93dc" />
      </svg>
    </TaskItem>
    <TaskItem w="w-[44px]">
      <svg width="24" height="24" viewBox="0 0 24 24">
        <path d="M12 23.5C4 23.5 0.5 17.5 0.8 12C1 8 3 5 4 4.5C4 6 4.5 6.5 5.5 6.8C8 6 10 6.8 11.5 8L14 1C16 1 22 5 23.2 12C24 19 19 23.5 12 23.5z" fill="#ff9a1f" />
        <path d="M14 0.5C12 5 17 7 18.5 12C20 8 23 10 23 13C23 8 18 5 14 0.5z" fill="#ffd93d" />
        <path d="M12 23.5C5 23.5 0.8 18 0.8 12C3 18 8 20 13 19.5C19 19 22 15 23.2 12C23.5 19 19 23.5 12 23.5z" fill="#f5306b" />
        <circle cx="12.3" cy="13" r="5" fill="#8045d8" /><path d="M4 9C8 7.5 10 9 12.5 10.5C10 11 9.5 13 8 12.5C6 12 5 10 4 9z" fill="#ffb52e" />
      </svg>
    </TaskItem>
    <TaskItem w="w-[53px]" line="w-[40px]">
      <svg width="26" height="25" viewBox="0 0 26 25" className="mt-px">
        <circle cx="12" cy="12" r="12" fill="#5865f2" />
        <path d="M7 8C10 6.5 14 6.5 17 8C19 11 19.5 14 19 16.5C17.5 17.6 16 18 15.5 18L14.5 16.3H9.5L8.5 18C7.5 18 6 17.3 5 16.5C4.6 13.5 5.5 10.5 7 8z" fill="#fff" />
        <circle cx="9.4" cy="12.8" r="1.5" fill="#5865f2" /><circle cx="14.6" cy="12.8" r="1.5" fill="#5865f2" />
        <circle cx="18.5" cy="17.8" r="7" fill="#ed4245" />
        <text x="18.5" y="21" fontSize="9" fill="#fff" fontWeight="700" textAnchor="middle" fontFamily="Open Sans">9+</text>
      </svg>
    </TaskItem>
    <TaskItem w="w-[48px]" line="w-[48px]" active>
      <div className="flex h-[22px] w-[22px] items-center justify-center bg-[#f4f6f7]"><TableauMark size={20} mono /></div>
    </TaskItem>
    <TaskItem w="w-[50px]" line="w-[40px]">
      <svg width="23" height="22" viewBox="0 0 23 22">
        <path d="M11 2.5H22.5V19.5H11z" fill="#fff" stroke="#2b579a" /><path d="M13 6H21M13 9H21M13 12H21M13 15H21" stroke="#2b579a" strokeWidth="1.1" />
        <path d="M0 2.5L13.5 0V22L0 19.5z" fill="#2b579a" />
        <text x="6.6" y="14.6" fontSize="10" fill="#fff" fontWeight="700" textAnchor="middle" fontFamily="Open Sans">W</text>
      </svg>
    </TaskItem>
    <div className="ml-auto flex h-full items-center">
      <Ico w={12} h={7} s="#fff"><path d="M0.8 6.3L6 1.2L11.2 6.3" strokeWidth="1.4" /></Ico>
      <svg width="16" height="16" viewBox="0 0 16 16" className="ml-[10px]">
        <path d="M8 1.8H7A6.2 6.2 0 0 0 7 14.2H8" fill="none" stroke="#00a8e8" strokeWidth="3.4" /><path d="M8.5 6H16V14.5H12.6V9.3H8.5z" fill="#00a8e8" />
      </svg>
      <Ico w={17} h={15} s="#fff" className="ml-[7px]"><path d="M5 2.6H16.4V10.8H4.6V7M10.5 10.8V14M6 14.2H14M0.6 1H4.6V5.6H0.6zM2.6 5.6V7.5" /></Ico>
      <Ico w={17} h={14} s="#fff" className="ml-[7px]"><path d="M0.6 4.6H3.2L7 1.2V12.8L3.2 9.4H0.6zM9 5C10 6 10 8 9 9M11.2 3C13.2 5 13.2 9 11.2 11" /><path d="M13.6 1.2C16.6 4.4 16.6 9.6 13.6 12.8" stroke="#777" /></Ico>
      <div className="ml-[7px] w-[56px] text-center text-[12px] leading-[18px] tracking-[-0.35px]">
        <div>7:41 AM</div>
        <div>6/8/2022</div>
      </div>
      <Ico w={17} h={17} s="#fff" className="ml-[16px] mt-px"><path d="M0.7 0.7H16.3V13H11L8.5 15.8L6 13H0.7z" strokeWidth="1.3" /></Ico>
      <div className="mr-[4px] ml-[20px] h-full w-px bg-[#555]" />
    </div>
  </div>
);

export default function App() {
  return (
    <div className="relative flex h-[1080px] w-[1920px] flex-col overflow-hidden bg-[#f4f4f4] font-['Open_Sans','Noto_Sans',sans-serif]">
      <TitleBar />
      <MenuBar />
      <Toolbar />
      <div className="flex h-[905px] shrink-0 gap-[6px]">
        <DataPane />
        <Cards />
        <div className="flex flex-1 flex-col gap-[6px]">
          <Shelves />
          <Chart />
        </div>
      </div>
      <SheetTabs />
      <StatusBar />
      <Taskbar />
      <ShowMe />
    </div>
  );
}
